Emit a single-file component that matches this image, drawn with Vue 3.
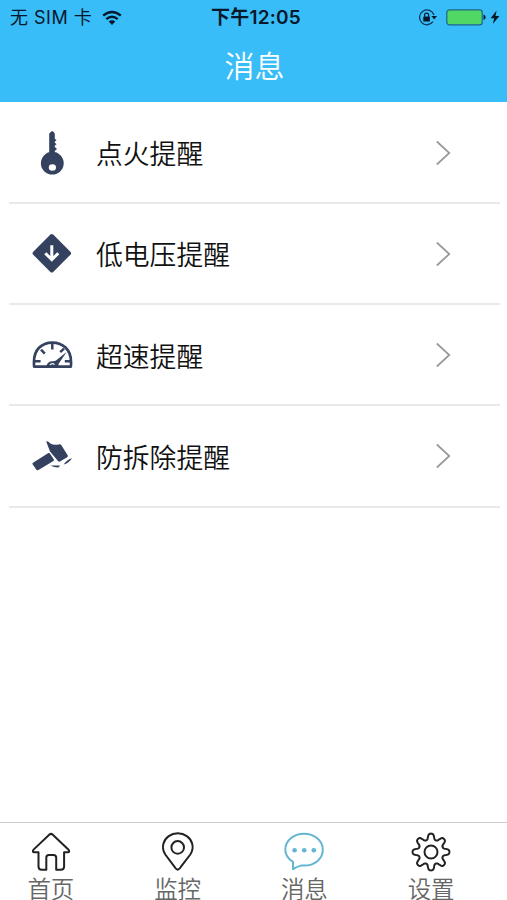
<template>
  <div class="screen">
    <header class="header">
      <div class="status-bar">
        <div class="status-left">
          <span>无 SIM 卡</span>
          <svg class="wifi" viewBox="0 0 20 16" width="20" height="16">
            <g fill="none" stroke="#07182b" stroke-width="2.4">
              <path d="M1.2 5.7Q10 -1.9 18.8 5.7" />
              <path d="M4.3 9.2Q10 4.1 15.7 9.2" />
            </g>
            <path d="M6.7 11.6Q10 8.8 13.3 11.6L10 15Z" fill="#07182b" />
          </svg>
        </div>
        <span class="status-time">下午12:05</span>
        <div class="status-right">
          <svg viewBox="0 0 20 18" width="20" height="18">
            <path d="M15 12.7A7.4 7.4 0 1 1 16 6" fill="none" stroke="#0a3558" stroke-width="1.3" />
            <path d="M13.4 6.9H19L16.2 10.5Z" fill="#07182b" />
            <rect x="5.3" y="7.5" width="6.6" height="5" rx=".5" fill="#07182b" />
            <path d="M6.6 7.8V6.1a2 2 0 0 1 4 0V7.8" fill="none" stroke="#07182b" stroke-width="1.2" />
          </svg>
          <svg class="battery" viewBox="0 0 40 17" width="40" height="17">
            <rect x=".8" y=".8" width="35.4" height="15" rx="2.6" fill="#4fd964" stroke="#1c668b" stroke-width="1.2" />
            <path d="M37.5 5.6Q39.6 6 39.6 8.3T37.5 11Z" fill="#07182b" />
          </svg>
          <svg class="bolt" viewBox="0 0 10 15" width="10" height="15">
            <path d="M6.6 .5L.6 8.2H4.2L2.8 14L9.4 6H5.5Z" fill="#07182b" />
          </svg>
        </div>
      </div>
      <h1 class="title">消息</h1>
    </header>

    <main class="list">
      <div v-for="item in items" :key="item.icon" class="list-item">
        <svg class="item-icon" viewBox="0 0 44 44" width="44" height="44">
          <g v-if="item.icon === 'key'">
            <path d="M19.2 13V3Q19.4 1.5 22.3 0Q24.8 1.5 24.8 3V7.8L26.6 9.2L24.8 10.6V11.8L26.6 13.2L24.8 14.6V16L27 18L24.8 20V25H19.2Z" />
            <circle cx="22.3" cy="32.2" r="11.4" />
            <ellipse cx="22.4" cy="36.5" rx="3.6" ry="3.2" fill="#fff" />
          </g>
          <g v-else-if="item.icon === 'voltage'">
            <path d="M20.4 2.6Q21.8 1.4 23.2 2.6L40.6 20Q41.6 21.4 40.6 22.6L23.2 40Q21.8 41.2 20.4 40L3 22.6Q2 21.4 3 20Z" />
            <path d="M21.8 13.2V27M15.3 21.2L21.8 27.7L28.3 21.2" fill="none" stroke="#fff" stroke-width="3" />
          </g>
          <g v-else-if="item.icon === 'speed'">
            <path d="M4.2 33.6Q3.9 33 4 28.6C4 17.1 11.3 9.6 22.3 9.6S41 17.1 41 28.6Q41.1 33 40.8 33.6Z" fill="none" stroke="#34415f" stroke-width="2.7" stroke-linejoin="round" />
            <path d="M22.3 10V16.4M11 16.6L14.8 20.6M34 15.6L30.2 19.2M5 28.3H10.6M40 28.3H34.8" fill="none" stroke="#34415f" stroke-width="2.5" />
            <path d="M36.6 19L28.5 31L28.6 34H16Q17.2 28 23 28.2Q25 28.1 26 27.4Z" />
            <path d="M19.8 32Q22 29.6 24.6 31.6" fill="none" stroke="#fff" stroke-width="1.1" />
          </g>
          <g v-else>
            <path d="M2.6 28.9L18.4 19Q19.4 18.6 19.9 19.6L23.9 25.4Q24.3 26.5 23.4 27.1L8 36.2Q7 36.6 6.4 35.7L2.4 30.1Z" />
            <path d="M16.2 7.4Q18 7 20.4 9.4Q23.5 11.4 28.8 10.4Q30.6 9.8 31.4 11.2L37.8 21.4Q38.2 22.6 37.2 23.2L29.9 27.6Q28.8 28.1 28 27.1L20 17.6Z" />
            <path d="M20.4 31.4H30L28.5 33.4Q24 33.5 20.4 31.4Z M33.6 30.6Q37.2 25.4 42 24.2Q39 29 33.6 30.6Z" />
          </g>
        </svg>
        <span class="item-title">{{ item.title }}</span>
        <svg class="chevron" viewBox="0 0 16 26" width="16" height="26">
          <path d="M1.8 1.5L14.3 13L1.8 24.5" fill="none" stroke="#999" stroke-width="1.7" />
        </svg>
      </div>
    </main>

    <nav class="tab-bar">
      <div v-for="tab in tabs" :key="tab.icon" class="tab" :class="{ active: tab.icon === current }">
        <svg viewBox="0 0 42 42" width="42" height="42" class="tab-icon">
          <path
            v-if="tab.icon === 'home'"
            d="M19.2 3.7Q21 2.1 22.8 3.7L38.3 18.4Q40.3 21 37.7 21.3H34.1V35.6Q34.1 38.8 30.8 38.8H26.2V26.6Q26.2 24 23.5 24H18.8Q16.3 24 16.3 26.6V38.8H11.8Q8.5 38.8 8.5 35.6V21.3H4.4Q1.7 21 3.8 18.4Z"
          />
          <g v-else-if="tab.icon === 'map'">
            <path d="M20.7 38.8Q18.6 38.2 17.4 35.6L8.3 23.5C5.8 19.8 5.8 15 6.4 12.8C8.2 6.3 14 2.3 20.7 2.3S33.5 6.3 35.2 12.8C35.8 15 35.8 19.8 33.3 23.5L24 35.6Q22.8 38.2 20.7 38.8Z" />
            <circle cx="20.7" cy="16.4" r="6.3" />
          </g>
          <g v-else-if="tab.icon === 'message'">
            <path d="M10 38V30.8C5.5 28 2.3 24 2.3 18.8C2.3 9.5 10.7 2.8 21 2.8S39.8 9.5 39.8 18.8S31.4 34.6 21 34.6H17.8Q14.2 35.7 10 38Z" />
            <g class="dots">
              <circle cx="11.6" cy="19.3" r="2.3" />
              <circle cx="21.2" cy="19.3" r="2.3" />
              <circle cx="30.8" cy="19.3" r="2.3" />
            </g>
          </g>
          <g v-else>
            <path :d="gearPath" />
            <circle cx="21" cy="21" r="6.5" />
          </g>
        </svg>
        <span class="tab-label">{{ tab.label }}</span>
      </div>
    </nav>
  </div>
</template>

<script setup>
import {ref} from 'vue'

const items = [
  {icon: 'key', title: '点火提醒'},
  {icon: 'voltage', title: '低电压提醒'},
  {icon: 'speed', title: '超速提醒'},
  {icon: 'hammer', title: '防拆除提醒'},
]

const tabs = [
  {icon: 'home', label: '首页'},
  {icon: 'map', label: '监控'},
  {icon: 'message', label: '消息'},
  {icon: 'settings', label: '设置'},
]

const current = ref('message')

// rounded gear outline with eight teeth
function buildGear(cx, cy) {
  const points = []
  for (let deg = 0; deg < 360; deg += 2) {
    const t = deg * Math.PI / 180
    const wave = Math.tanh(1.5 * Math.cos(8 * t)) / Math.tanh(1.5)
    const r = 15.5 + 2.9 * wave
    points.push(`${(cx + r * Math.cos(t)).toFixed(2)} ${(cy + r * Math.sin(t)).toFixed(2)}`)
  }
  return `M${points.join('L')}Z`
}

const gearPath = buildGear(21, 21)
</script>

<style>
body {
  margin: 0;
}
</style>

<style scoped>
.screen {
  display: flex;
  flex-direction: column;
  width: 507px;
  height: 900px;
  overflow: hidden;
  background: #fff;
  font-family: "Liberation Sans", "Noto Sans CJK SC", sans-serif;
}

.header {
  height: 102.4px;
  flex-shrink: 0;
  background: #38bdf8;
}

.status-bar {
  display: grid;
  grid-template-columns: 1fr auto 1fr;
  align-items: center;
  height: 34px;
  padding: 0 7px 0 10px;
  color: #07182b;
  font-family: Inter, "Noto Sans CJK SC", sans-serif;
  font-size: 18px;
  line-height: 34px;
}

.status-left,
.status-right {
  display: flex;
  align-items: center;
}

.status-left {
  letter-spacing: 0.5px;
  white-space: nowrap;
}

.wifi {
  margin-left: 10px;
}

.status-time {
  padding: 1px 0 0 2px;
  font-size: 19px;
  font-weight: 600;
  letter-spacing: 0.2px;
}

.status-right {
  justify-content: flex-end;
}

.battery {
  margin-left: 8px;
}

.bolt {
  margin-left: 4px;
}

.title {
  margin: 0;
  padding: 1px 0 0 2px;
  color: #fff;
  font-size: 30px;
  font-weight: 350;
  line-height: 64px;
  text-align: center;
}

.list {
  flex: 1;
  padding: 0 7px 0 9px;
}

.list-item {
  display: flex;
  align-items: center;
  box-sizing: border-box;
  height: 101.3px;
  padding: 1px 49px 0 21px;
  border-bottom: 2px solid #e9e9e9;
}

.item-title {
  flex: 1;
  margin-left: 22px;
  color: #111;
  font-size: 26.8px;
  font-weight: 350;
}

.tab-bar {
  display: flex;
  box-sizing: border-box;
  height: 78px;
  flex-shrink: 0;
  border-top: 1px solid #ccc;
}

.tab {
  display: flex;
  flex: 1;
  flex-direction: column;
  align-items: center;
  padding: 8px 25px 0 0;
}

.tab-icon {
  flex-shrink: 0;
  fill: none;
  stroke: #222;
  stroke-width: 2;
  stroke-linejoin: round;
}

.item-icon {
  fill: #34415f;
}

.active .tab-icon {
  stroke: #63b5d2;
}

.active .dots {
  fill: #63b5d2;
  stroke: none;
}

.tab-label {
  margin-top: 7px;
  color: #666;
  font-size: 23.5px;
  font-weight: 350;
  line-height: 20px;
}
</style>
